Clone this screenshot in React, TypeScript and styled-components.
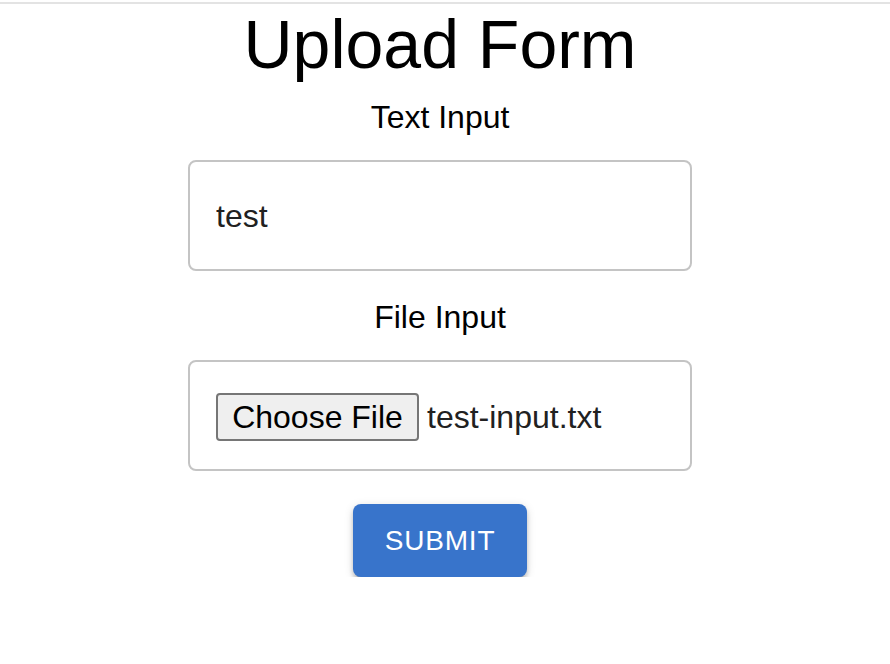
import { useState } from "react";
import styled, { createGlobalStyle } from "styled-components";

const GlobalStyle = createGlobalStyle`
  html, body {
    margin: 0;
    padding: 0;
    background: #ffffff;
  }
  body {
    font-family: "Liberation Sans", Arial, Helvetica, sans-serif;
    color: #000000;
  }
`;

const App = () => {
  const [text, setText] = useState("test");

  return (
    <>
      <GlobalStyle />
      <TopRule />
      <Page>
        <Title>Upload Form</Title>
        <FieldLabel $first>Text Input</FieldLabel>
        <Box>
          <TextField value={text} onChange={(e) => setText(e.target.value)} />
        </Box>
        <FieldLabel>File Input</FieldLabel>
        <Box>
          <FileRow>
            <ChooseButton type="button">Choose File</ChooseButton>
            <FileName>test-input.txt</FileName>
          </FileRow>
        </Box>
        <SubmitButton type="button">Submit</SubmitButton>
      </Page>
    </>
  );
};

const TopRule = styled.div`
  margin-top: 2px;
  height: 2px;
  width: 100%;
  background-color: #e3e3e3;
`;

const Page = styled.div`
  width: 880px;
  display: flex;
  flex-direction: column;
  align-items: center;
`;

const Title = styled.h1`
  margin: 0;
  font-size: 68px;
  line-height: 80px;
  font-weight: 400;
  color: #000000;
`;

const FieldLabel = styled.div<{ $first?: boolean }>`
  margin-top: ${(p) => (p.$first ? "9px" : "22px")};
  margin-bottom: 19px;
  font-size: 32px;
  line-height: 48px;
  color: #000000;
`;

const Box = styled.div`
  box-sizing: border-box;
  width: 504px;
  height: 111px;
  border: 2px solid #c4c4c4;
  border-radius: 8px;
  padding: 0 26px;
  display: flex;
  align-items: center;
`;

const TextField = styled.input`
  border: none;
  outline: none;
  padding: 0;
  width: 100%;
  font-family: inherit;
  font-size: 32px;
  line-height: 46px;
  color: #212121;
  background: transparent;
`;

const FileRow = styled.div`
  display: flex;
  align-items: center;
  gap: 8px;
  margin-top: 3px;
`;

const ChooseButton = styled.button`
  box-sizing: border-box;
  height: 48px;
  width: 203px;
  padding: 0;
  border: 2px solid #767676;
  border-radius: 4px;
  background-color: #efefef;
  font-family: inherit;
  font-size: 32px;
  color: #000000;
  cursor: pointer;
`;

const FileName = styled.span`
  font-size: 32px;
  color: #212121;
`;

const SubmitButton = styled.button`
  margin-top: 33px;
  box-sizing: border-box;
  width: 174px;
  height: 73px;
  border: none;
  border-radius: 8px;
  background-color: #3874cb;
  color: #ffffff;
  font-family: inherit;
  font-size: 28px;
  font-weight: 400;
  letter-spacing: 0.8px;
  text-transform: uppercase;
  box-shadow: 0 6px 2px -4px rgba(0, 0, 0, 0.2), 0 4px 4px 0 rgba(0, 0, 0, 0.18),
    0 2px 10px 0 rgba(0, 0, 0, 0.14);
  cursor: pointer;
`;

export default App;
